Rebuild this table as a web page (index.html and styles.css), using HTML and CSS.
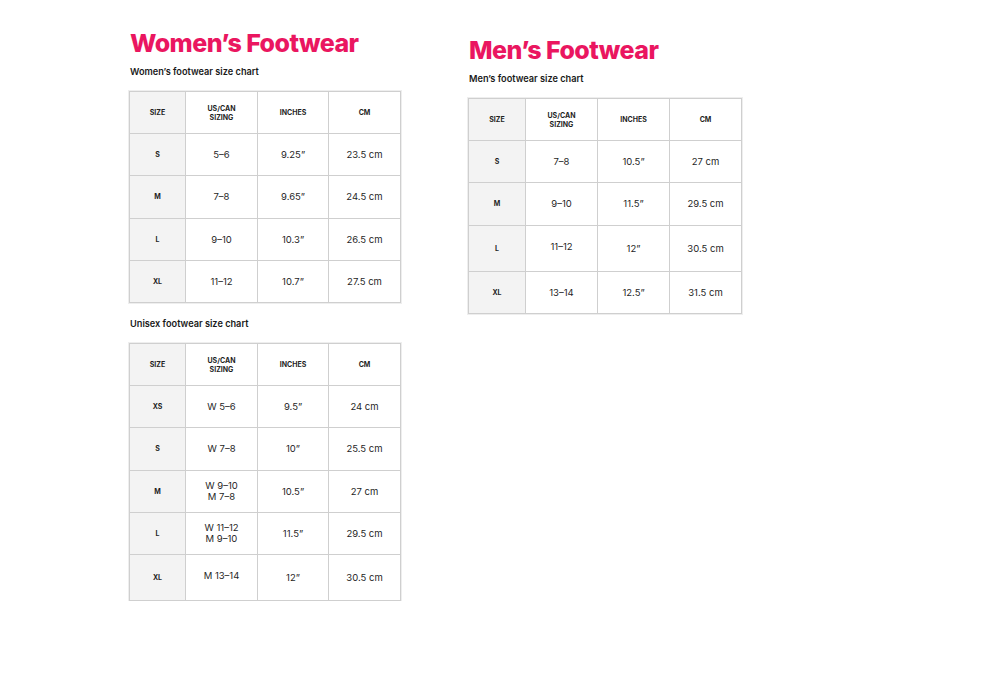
FILE: index.html
```html
<!DOCTYPE html>
<html>
<head>
<meta charset="utf-8">
<link rel="stylesheet" href="styles.css">
</head>
<body>
<div class="page">
  <section class="col col-left">
    <h1 class="title">Women’s Footwear</h1>
    <h2 class="subtitle">Women’s footwear size chart</h2>
    <table class="chart">
      <colgroup><col class="c1"><col class="c2"><col class="c3"><col class="c4"></colgroup>
      <tr class="head"><td class="size">SIZE</td><td>US/CAN<br>SIZING</td><td>INCHES</td><td>CM</td></tr>
      <tr><td class="size">S</td><td>5–6</td><td>9.25”</td><td>23.5 cm</td></tr>
      <tr><td class="size">M</td><td>7–8</td><td>9.65”</td><td>24.5 cm</td></tr>
      <tr><td class="size">L</td><td>9–10</td><td>10.3”</td><td>26.5 cm</td></tr>
      <tr><td class="size">XL</td><td>11–12</td><td>10.7”</td><td>27.5 cm</td></tr>
    </table>
    <h2 class="subtitle sub-unisex">Unisex footwear size chart</h2>
    <table class="chart">
      <colgroup><col class="c1"><col class="c2"><col class="c3"><col class="c4"></colgroup>
      <tr class="head"><td class="size">SIZE</td><td>US/CAN<br>SIZING</td><td>INCHES</td><td>CM</td></tr>
      <tr><td class="size">XS</td><td>W 5–6</td><td>9.5”</td><td>24 cm</td></tr>
      <tr><td class="size">S</td><td>W 7–8</td><td>10”</td><td>25.5 cm</td></tr>
      <tr><td class="size">M</td><td>W 9–10<br>M 7–8</td><td>10.5”</td><td>27 cm</td></tr>
      <tr><td class="size">L</td><td>W 11–12<br>M 9–10</td><td>11.5”</td><td>29.5 cm</td></tr>
      <tr><td class="size">XL</td><td class="up">M 13–14</td><td>12”</td><td>30.5 cm</td></tr>
    </table>
  </section>
  <section class="col col-right">
    <h1 class="title">Men’s Footwear</h1>
    <h2 class="subtitle">Men’s footwear size chart</h2>
    <table class="chart">
      <colgroup><col class="c1"><col class="c2"><col class="c3"><col class="c4"></colgroup>
      <tr class="head"><td class="size">SIZE</td><td>US/CAN<br>SIZING</td><td>INCHES</td><td>CM</td></tr>
      <tr><td class="size">S</td><td>7–8</td><td>10.5”</td><td>27 cm</td></tr>
      <tr><td class="size">M</td><td>9–10</td><td>11.5”</td><td>29.5 cm</td></tr>
      <tr><td class="size">L</td><td class="up">11–12</td><td>12”</td><td>30.5 cm</td></tr>
      <tr><td class="size">XL</td><td>13–14</td><td>12.5”</td><td>31.5 cm</td></tr>
    </table>
  </section>
</div>
</body>
</html>
```

FILE: styles.css
```css
html, body {
  margin: 0;
  padding: 0;
  background: #ffffff;
}

body {
  font-family: Inter, "Noto Sans", "Liberation Sans", sans-serif;
  color: #1a1a1a;
}

.page {
  display: flex;
  align-items: flex-start;
  padding: 28px 0 0 129px;
}

.col {
  display: flex;
  flex-direction: column;
}

.col-left {
  width: 271px;
}

.col-right {
  margin-left: 68px;
  margin-top: 7px;
  width: 273px;
}

.title {
  margin: 0 0 0 1px;
  font-size: 25px;
  line-height: 30px;
  font-weight: 800;
  color: #ea1660;
  letter-spacing: -0.55px;
}

.subtitle {
  margin: 8px 0 0 1px;
  font-size: 9.2px;
  line-height: 12px;
  font-weight: 600;
  color: #1a1a1a;
}

.sub-unisex {
  margin-top: 15px;
}

.chart {
  margin-top: 13px;
  border-collapse: collapse;
  table-layout: fixed;
  width: 271px;
  outline: 1px solid #eeeeee;
}

.col-right .chart {
  width: 273px;
}

.c1 { width: 56px; }
.c2 { width: 72px; }
.c3 { width: 71px; }
.c4 { width: 72px; }

.col-right .c1 { width: 57px; }
.col-right .c3 { width: 72px; }
.col-right .c4 { width: 72px; }

.chart td {
  border: 1px solid #cfcfcf;
  height: 41.2px;
  padding: 0;
  text-align: center;
  vertical-align: middle;
  font-size: 9.5px;
  line-height: 11px;
  font-weight: 400;
  color: #1f1f1f;
}

.chart td.size {
  background: #f3f3f3;
  font-size: 7px;
  font-weight: 700;
}

.chart .head td {
  font-size: 7px;
  line-height: 9px;
  font-weight: 700;
}

.chart td.up {
  padding-bottom: 4px;
}
```
